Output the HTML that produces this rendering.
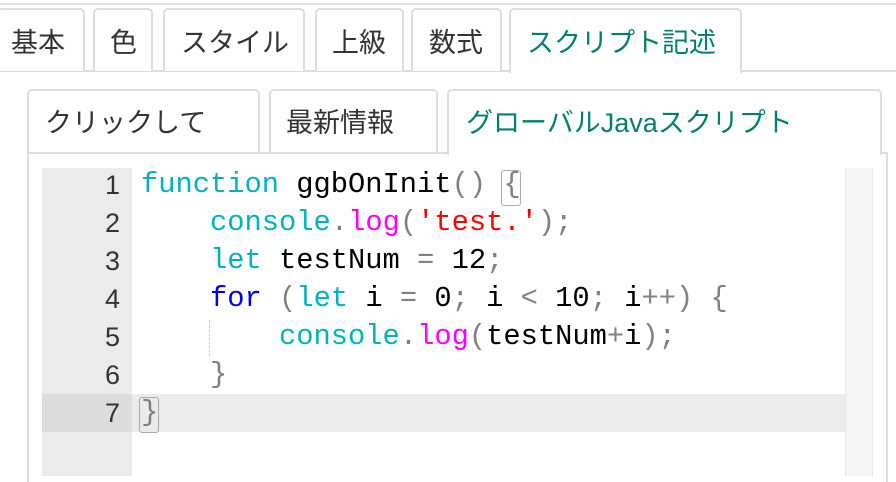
<!DOCTYPE html>
<html><head><meta charset="utf-8"><style>
*{margin:0;padding:0;box-sizing:border-box}
body{width:896px;height:476px;overflow:hidden;background:#fff;position:relative;font-family:"Liberation Sans","Noto Sans CJK JP",sans-serif;color:#333}
.abs{position:absolute}
.tab{position:absolute;border:2px solid #ddd;border-bottom:none;border-radius:5px 5px 0 0;background:#fff;font-size:27px;line-height:1;padding-top:20px;white-space:nowrap}
.act{color:#00806e}
.code{position:absolute;left:141px;top:166px;font-family:"Liberation Mono",monospace;font-size:28.75px;line-height:38px;white-space:pre;color:#000}
.k{color:#00b3bf}.b{color:#0000ee}.m{color:#ff00ff}.s{color:#ff0000}.p{color:#808080}
.ln{position:absolute;left:42px;width:78px;text-align:right;font-family:"Liberation Sans",sans-serif;font-size:27px;line-height:38px;color:#333}
</style></head><body>
<div class="abs" style="left:0;top:3px;width:896px;height:2px;background:#e6e6e6"></div>
<div class="abs" style="left:0;top:70px;width:896px;height:2px;background:#ddd"></div>
<div class="tab" style="left:-3px;top:8px;width:88px;height:63px;padding-left:12px">基本</div>
<div class="tab" style="left:93px;top:8px;width:60px;height:63px;padding-left:15px">色</div>
<div class="tab" style="left:163px;top:8px;width:142px;height:63px;padding-left:16px">スタイル</div>
<div class="tab" style="left:315px;top:8px;width:89px;height:63px;padding-left:15px">上級</div>
<div class="tab" style="left:411px;top:8px;width:91px;height:63px;padding-left:16px">数式</div>
<div class="tab act" style="left:509px;top:8px;width:233px;height:65px;padding-left:16px">スクリプト記述</div>
<div class="abs" style="left:27px;top:152px;width:861px;height:330px;border:2px solid #ddd;border-bottom:none"></div>
<div class="tab" style="left:27px;top:89px;width:233px;height:63px;padding-left:16px;padding-top:19px">クリックして</div>
<div class="tab" style="left:269px;top:89px;width:169px;height:63px;padding-left:15px;padding-top:19px">最新情報</div>
<div class="tab act" style="left:447px;top:89px;width:435px;height:66px;padding-left:17px;padding-top:19px">グローバルJavaスクリプト</div>
<div class="abs" style="left:42px;top:168px;width:90px;height:308px;background:#ebebeb"></div>
<div class="abs" style="left:42px;top:394px;width:90px;height:38px;background:#dcdcdc"></div>
<div class="abs" style="left:132px;top:394px;width:713px;height:38px;background:#ebebeb"></div>
<div class="abs" style="left:845px;top:168px;width:28px;height:308px;background:#f5f5f5;border-left:1px solid #e6e6e6;border-right:1px solid #e6e6e6"></div>
<div class="abs" style="left:209px;top:320px;width:0;height:36px;border-left:1px dotted #bbb"></div>
<div class="ln" style="top:166px">1</div><div class="ln" style="top:204px">2</div><div class="ln" style="top:242px">3</div><div class="ln" style="top:280px">4</div><div class="ln" style="top:318px">5</div><div class="ln" style="top:356px">6</div><div class="ln" style="top:394px">7</div>
<div class="abs" style="left:501px;top:170px;width:20px;height:36px;border:1px solid #aaa;border-radius:3px"></div>
<div class="abs" style="left:139px;top:397px;width:20px;height:36px;border:1px solid #aaa;border-radius:3px"></div>
<div class="code"><span class="k">function</span> ggbOnInit<span class="p">()</span> <span class="p">{</span>
    <span class="k">console</span><span class="p">.</span><span class="m">log</span><span class="p">(</span><span class="s">'test.'</span><span class="p">);</span>
    <span class="k">let</span> testNum <span class="p">=</span> 12<span class="p">;</span>
    <span class="b">for</span> <span class="p">(</span><span class="k">let</span> i <span class="p">=</span> 0<span class="p">;</span> i <span class="p">&lt;</span> 10<span class="p">;</span> i<span class="p">++)</span> <span class="p">{</span>
        <span class="k">console</span><span class="p">.</span><span class="m">log</span><span class="p">(</span>testNum<span class="p">+</span>i<span class="p">);</span>
    <span class="p">}</span>
<span class="p">}</span></div>
</body></html>
